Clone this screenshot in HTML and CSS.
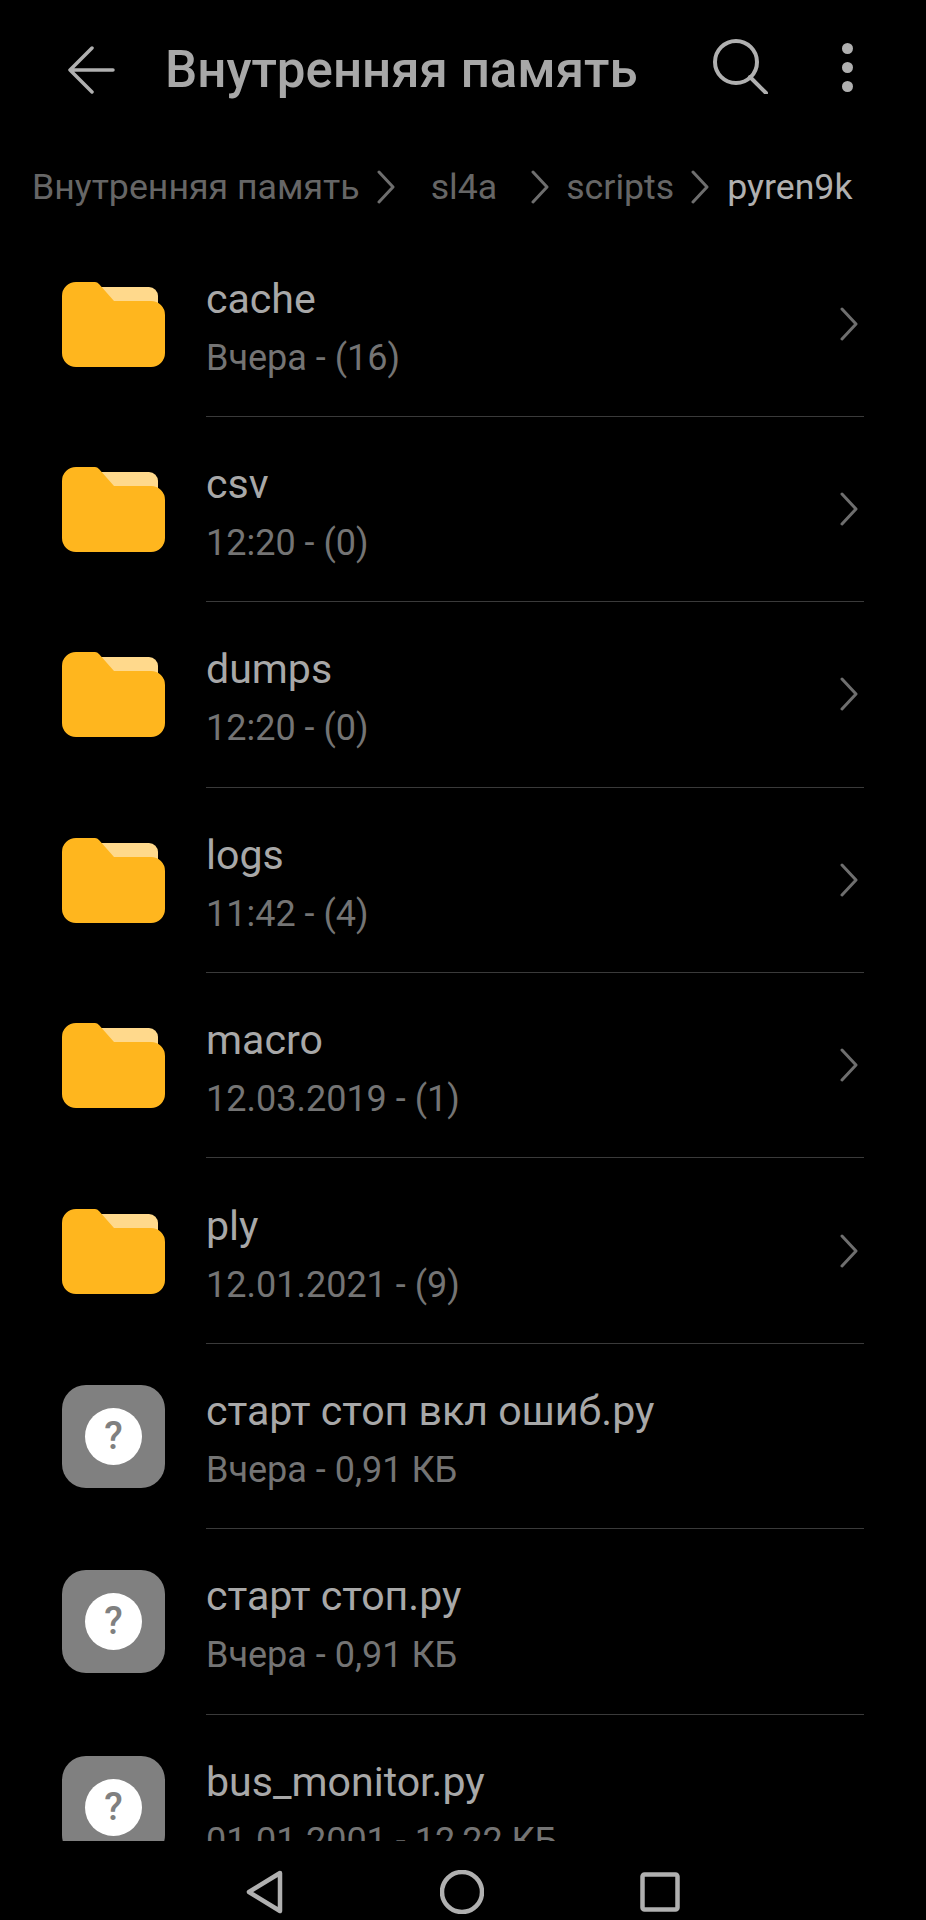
FILE: index.html
```html
<!DOCTYPE html>
<html lang="ru">
<head>
<meta charset="utf-8">
<title>Внутренняя память</title>
<link rel="stylesheet" href="styles.css">
</head>
<body>
<div class="screen">
  <header class="topbar">
    <svg class="back" width="48" height="48" viewBox="0 0 48 48"><path d="M25 2 3 24l22 22M3 24h43"/></svg>
    <h1 class="title">Внутренняя память</h1>
    <svg class="search" width="56" height="56" viewBox="0 0 56 56"><circle cx="24" cy="24" r="21"/><path d="m38 39 16 16"/></svg>
    <div class="dots"><i></i><i></i><i></i></div>
  </header>
  <nav class="crumbs">
    <span>Внутренняя память</span>
    <svg class="sep sep-a" width="18" height="34" viewBox="0 0 18 34"><path d="m2 2 14 15L2 32"/></svg>
    <span class="wide">sl4a</span>
    <svg class="sep sep-b" width="18" height="34" viewBox="0 0 18 34"><path d="m2 2 14 15L2 32"/></svg>
    <span>scripts</span>
    <svg class="sep sep-c" width="18" height="34" viewBox="0 0 18 34"><path d="m2 2 14 15L2 32"/></svg>
    <span class="current">pyren9k</span>
  </nav>
  <main class="list">
    <div class="row">
      <svg class="folder" width="103" height="85" viewBox="0 0 103 85"><path class="sheet" d="M37 5h50a9 9 0 0 1 9 9v8H50z"/><path class="body" d="M0 14A14 14 0 0 1 14 0h19a6 6 0 0 1 4 2l15 17h37a14 14 0 0 1 14 14v38a14 14 0 0 1-14 14H14A14 14 0 0 1 0 71z"/></svg>
      <div class="info">
        <div class="text"><div class="name">cache</div><div class="meta">Вчера - (16)</div></div>
        <svg class="chev" width="18" height="34" viewBox="0 0 18 34"><path d="m2 2 14 15L2 32"/></svg>
      </div>
    </div>
    <div class="row">
      <svg class="folder" width="103" height="85" viewBox="0 0 103 85"><path class="sheet" d="M37 5h50a9 9 0 0 1 9 9v8H50z"/><path class="body" d="M0 14A14 14 0 0 1 14 0h19a6 6 0 0 1 4 2l15 17h37a14 14 0 0 1 14 14v38a14 14 0 0 1-14 14H14A14 14 0 0 1 0 71z"/></svg>
      <div class="info">
        <div class="text"><div class="name">csv</div><div class="meta">12:20 - (0)</div></div>
        <svg class="chev" width="18" height="34" viewBox="0 0 18 34"><path d="m2 2 14 15L2 32"/></svg>
      </div>
    </div>
    <div class="row">
      <svg class="folder" width="103" height="85" viewBox="0 0 103 85"><path class="sheet" d="M37 5h50a9 9 0 0 1 9 9v8H50z"/><path class="body" d="M0 14A14 14 0 0 1 14 0h19a6 6 0 0 1 4 2l15 17h37a14 14 0 0 1 14 14v38a14 14 0 0 1-14 14H14A14 14 0 0 1 0 71z"/></svg>
      <div class="info">
        <div class="text"><div class="name">dumps</div><div class="meta">12:20 - (0)</div></div>
        <svg class="chev" width="18" height="34" viewBox="0 0 18 34"><path d="m2 2 14 15L2 32"/></svg>
      </div>
    </div>
    <div class="row">
      <svg class="folder" width="103" height="85" viewBox="0 0 103 85"><path class="sheet" d="M37 5h50a9 9 0 0 1 9 9v8H50z"/><path class="body" d="M0 14A14 14 0 0 1 14 0h19a6 6 0 0 1 4 2l15 17h37a14 14 0 0 1 14 14v38a14 14 0 0 1-14 14H14A14 14 0 0 1 0 71z"/></svg>
      <div class="info">
        <div class="text"><div class="name">logs</div><div class="meta">11:42 - (4)</div></div>
        <svg class="chev" width="18" height="34" viewBox="0 0 18 34"><path d="m2 2 14 15L2 32"/></svg>
      </div>
    </div>
    <div class="row">
      <svg class="folder" width="103" height="85" viewBox="0 0 103 85"><path class="sheet" d="M37 5h50a9 9 0 0 1 9 9v8H50z"/><path class="body" d="M0 14A14 14 0 0 1 14 0h19a6 6 0 0 1 4 2l15 17h37a14 14 0 0 1 14 14v38a14 14 0 0 1-14 14H14A14 14 0 0 1 0 71z"/></svg>
      <div class="info">
        <div class="text"><div class="name">macro</div><div class="meta">12.03.2019 - (1)</div></div>
        <svg class="chev" width="18" height="34" viewBox="0 0 18 34"><path d="m2 2 14 15L2 32"/></svg>
      </div>
    </div>
    <div class="row">
      <svg class="folder" width="103" height="85" viewBox="0 0 103 85"><path class="sheet" d="M37 5h50a9 9 0 0 1 9 9v8H50z"/><path class="body" d="M0 14A14 14 0 0 1 14 0h19a6 6 0 0 1 4 2l15 17h37a14 14 0 0 1 14 14v38a14 14 0 0 1-14 14H14A14 14 0 0 1 0 71z"/></svg>
      <div class="info">
        <div class="text"><div class="name">ply</div><div class="meta">12.01.2021 - (9)</div></div>
        <svg class="chev" width="18" height="34" viewBox="0 0 18 34"><path d="m2 2 14 15L2 32"/></svg>
      </div>
    </div>
    <div class="row">
      <div class="unknown"><span class="qmark">?</span></div>
      <div class="info">
        <div class="text"><div class="name">старт стоп вкл ошиб.py</div><div class="meta">Вчера - 0,91 КБ</div></div>
      </div>
    </div>
    <div class="row">
      <div class="unknown"><span class="qmark">?</span></div>
      <div class="info">
        <div class="text"><div class="name">старт стоп.py</div><div class="meta">Вчера - 0,91 КБ</div></div>
      </div>
    </div>
    <div class="row">
      <div class="unknown"><span class="qmark">?</span></div>
      <div class="info">
        <div class="text"><div class="name">bus_monitor.py</div><div class="meta">01.01.2001 - 12,22 КБ</div></div>
      </div>
    </div>
  </main>
  <footer class="navbar">
    <svg width="38" height="44" viewBox="0 0 38 44"><path d="M34 3 3 22l31 19z"/></svg>
    <svg width="44" height="44" viewBox="0 0 44 44"><circle cx="22" cy="22" r="20"/></svg>
    <svg width="40" height="40" viewBox="0 0 40 40"><rect x="2.5" y="2.5" width="35" height="35" rx="2"/></svg>
  </footer>
</div>
</body>
</html>
```
FILE: styles.css
```css
* { box-sizing: border-box; }
html, body { margin: 0; padding: 0; background: #000; }
.screen {
  width: 926px;
  height: 1920px;
  display: flex;
  flex-direction: column;
  overflow: hidden;
  background: #000;
  font-family: Roboto, "Noto Sans", sans-serif;
}
svg { display: block; flex: none; fill: none; }
.topbar {
  height: 139px;
  display: flex;
  align-items: center;
  padding-left: 67px;
}
.back path { stroke: #b0b0b0; stroke-width: 3.5; stroke-linecap: round; stroke-linejoin: round; }
.title {
  margin: 0 0 0 50px;
  width: 532px;
  font-size: 51.1px;
  font-weight: 500;
  color: #a8a8a8;
  white-space: nowrap;
}
.search { margin: 0 0 7px 15px; }
.search circle, .search path { stroke: #b0b0b0; stroke-width: 4; stroke-linecap: round; }
.dots { margin: 0 0 5px 74px; display: flex; flex-direction: column; gap: 8px; }
.dots i { display: block; width: 11px; height: 11px; border-radius: 50%; background: #b0b0b0; }
.crumbs {
  height: 92.5px;
  display: flex;
  align-items: center;
  padding: 4px 0 0 32px;
  font-size: 35.7px;
  color: #666;
  white-space: nowrap;
}
.sep path, .chev path { stroke: #6e6e6e; stroke-width: 3; stroke-linecap: round; stroke-linejoin: round; }
.sep-a { margin-left: 17px; }
.wide { margin-left: 36px; }
.sep-b { margin-left: 34px; }
.sep-b + span { margin-left: 17px; }
.sep-c { margin-left: 17px; }
.sep-c + .current { margin-left: 18px; }
.current { color: #b0b0b0; }
.list {
  flex: 1;
  min-height: 0;
  overflow: hidden;
  padding: 0 62px;
}
.row {
  height: 185.4px;
  display: flex;
  align-items: center;
}
.folder .body { fill: #ffb61e; }
.folder .sheet { fill: #ffd98c; }
.unknown {
  flex: none;
  width: 103px;
  height: 103px;
  border-radius: 24px;
  background: #808080;
  display: flex;
  align-items: center;
  justify-content: center;
}
.qmark {
  width: 57px;
  height: 57px;
  border-radius: 50%;
  background: #fff;
  color: #808080;
  font-size: 38px;
  font-weight: 500;
  line-height: 57px;
  text-align: center;
}
.info {
  flex: 1;
  align-self: stretch;
  margin-left: 41px;
  display: flex;
  align-items: center;
  justify-content: space-between;
  border-bottom: 1px solid #3a3a3a;
  padding-right: 6px;
}
.text { padding-top: 8px; }
.name {
  font-size: 41.1px;
  line-height: 46px;
  color: #a8a8a8;
  white-space: nowrap;
}
.meta {
  font-size: 36px;
  line-height: 44px;
  margin-top: 14px;
  color: #747474;
  white-space: nowrap;
}
.navbar {
  height: 79px;
  padding-top: 22px;
  display: flex;
  align-items: center;
  justify-content: center;
  gap: 156px;
  background: #000;
}
.navbar path, .navbar circle, .navbar rect {
  stroke: #b0b0b0;
  stroke-width: 4.5;
  stroke-linejoin: round;
}
```
